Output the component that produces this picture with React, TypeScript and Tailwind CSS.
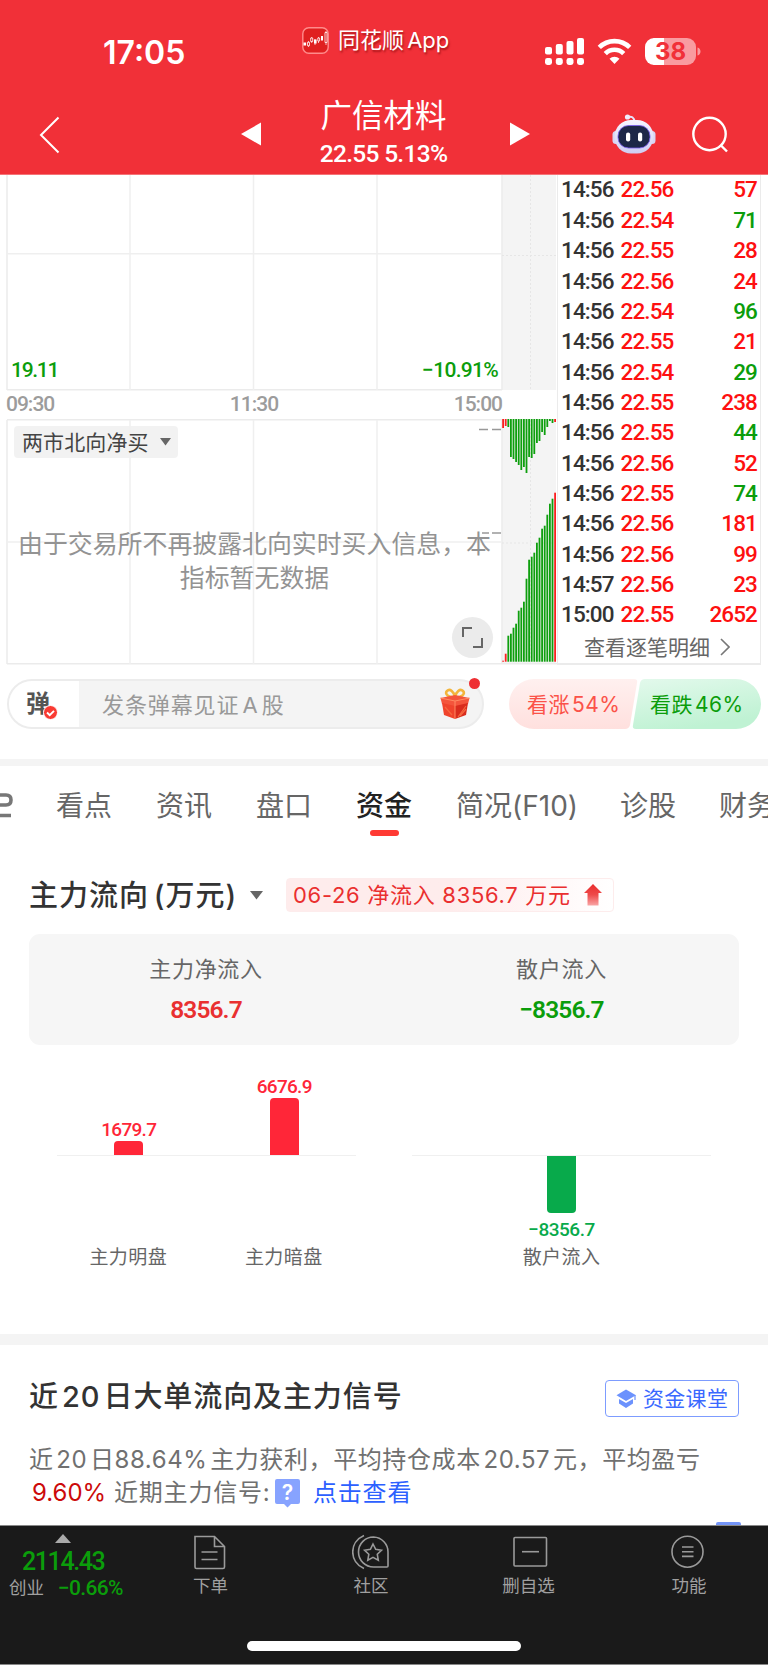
import type { ReactNode } from "react";

type Trade = [time: string, price: string, volume: string, dir: "up" | "down"];

const trades: Trade[] = [
  ["14:56", "22.56", "57", "up"],
  ["14:56", "22.54", "71", "down"],
  ["14:56", "22.55", "28", "up"],
  ["14:56", "22.56", "24", "up"],
  ["14:56", "22.54", "96", "down"],
  ["14:56", "22.55", "21", "up"],
  ["14:56", "22.54", "29", "down"],
  ["14:56", "22.55", "238", "up"],
  ["14:56", "22.55", "44", "down"],
  ["14:56", "22.56", "52", "up"],
  ["14:56", "22.55", "74", "down"],
  ["14:56", "22.56", "181", "up"],
  ["14:56", "22.56", "99", "up"],
  ["14:57", "22.56", "23", "up"],
  ["15:00", "22.55", "2652", "up"],
];

// Call auction volumes, in px of the side chart
const unmatched = [9, 7, 8, 38, 40, 43, 46, 51, 48, 54, 38, 39, 35, 24, 22, 13, 16, 8, 2, 4, 3];
const matched = [1, 8, 26, 28, 34, 38, 51, 54, 60, 83, 102, 105, 109, 119, 124, 133, 136, 147, 158, 163, 169];

function auctionColor(i: number) {
  return i < 2 || i === unmatched.length - 1 ? "#fb2020" : "#0e9f0e";
}

function StatusBar() {
  return (
    <div className="flex h-[92px] items-start">
      <div className="w-[302px] pt-[37px] pl-[103px] text-[32px] leading-[31px] font-semibold">
        17:05
      </div>
      <div className="flex w-[243px] items-center pt-[27px]">
        <svg width="27" height="27" viewBox="0 0 27 27" fill="none">
          <rect x="0.8" y="0.8" width="25.4" height="25.4" rx="6" fill="#e02020" stroke="#ff8b8b" strokeWidth="1.4" />
          <path d="M6.500 14v6M9.700 10v6M16.500 10v6M13 12v6M24 4v14" stroke="#fff" strokeWidth="0.7" />
          <path d="M1.5 15.5h2.6v3H1.5zM12 12.500h2.6v4H12zM19 9h2v4.500h-2z" fill="#fff" />
          <path d="M5.5 15.3h2v3.4h-2zM8.7 11h2v3.5h-2zM15.8 11h1.8v3h-1.8zM23 5.5h2v10h-2z" fill="#e02020" stroke="#fff" strokeWidth="0.8" />
        </svg>
        <div className="ml-[9px] text-[22px] leading-[27px] [text-shadow:1px_2px_2px_rgba(110,0,0,0.55)] [word-spacing:-3px]">
          同花顺 App
        </div>
      </div>
      <svg className="mt-[38px]" width="158" height="28" viewBox="0 0 158 28" fill="#fff">
        <rect x="0" y="9" width="7" height="7.500" rx="2" />
        <rect x="10.800" y="6" width="7" height="10.500" rx="2" />
        <rect x="21.500" y="3" width="7" height="13.500" rx="2" />
        <rect x="32" y="0" width="7" height="16.500" rx="2" />
        <rect x="0" y="20" width="7" height="7" rx="2.400" />
        <rect x="10.800" y="20" width="7" height="7" rx="2.400" />
        <rect x="21.500" y="20" width="7" height="7" rx="2.400" />
        <rect x="32" y="20" width="7" height="7" rx="2.400" />
        <g fill="none" stroke="#fff" strokeWidth="4.600">
          <path d="M54.300 9.400a21.500 21.500 0 0 1 30.400 0" />
          <path d="M60.300 15.600a13 13 0 0 1 18.400 0" />
        </g>
        <path d="M69.500 26l-5-5.200a7.200 7.200 0 0 1 10 0z" />
        <path d="M108 0h34a9 9 0 0 1 9 9v9a9 9 0 0 1-9 9h-34z" fill="#f99ba0" />
        <path d="M119 0h-10a9 9 0 0 0-9 9v9a9 9 0 0 0 9 9h10z" />
        <path d="M152.500 9.500c4 1 4 7 0 8z" fill="#f99ba0" />
        <text x="125.500" y="22" textAnchor="middle" fill="#f13038" fontFamily="Inter, sans-serif" fontSize="24" fontWeight="700">
          38
        </text>
      </svg>
    </div>
  );
}

function TitleBar() {
  return (
    <div className="flex h-[82px] items-start">
      <svg className="mt-[24px] ml-[38px]" width="22" height="38" viewBox="0 0 22 38" fill="none" stroke="#fff" strokeWidth="2">
        <path d="M20.500 1.500L3 19l17.500 17.500" />
      </svg>
      <svg className="mt-[30px] ml-[181px]" width="20" height="24" viewBox="0 0 20 24" fill="#fff">
        <path d="M20 0.500v23L0 12z" />
      </svg>
      <div className="flex w-[249px] flex-col items-center pr-[4px]">
        <div className="mt-[8px] text-[31.500px] leading-[32px]">广信材料</div>
        <div className="mt-[9px] font-['Roboto',sans-serif] text-[24.500px] leading-[25px] font-medium tracking-[-0.7px]">
          22.55 5.13%
        </div>
      </div>
      <svg className="mt-[30px]" width="20" height="24" viewBox="0 0 20 24" fill="#fff">
        <path d="M0 0.500v23L20 12z" />
      </svg>
      <svg className="mt-[21px] ml-[82px]" width="44" height="42" viewBox="0 0 44 42">
        <defs>
          <linearGradient id="bot" x1="0" y1="0" x2="0" y2="1">
            <stop offset="0" stopColor="#f6f5ff" />
            <stop offset="1" stopColor="#cfcdf2" />
          </linearGradient>
        </defs>
        <path d="M15 4c5-1 7 0 7.500 5" fill="none" stroke="#e6e4fb" strokeWidth="2" />
        <circle cx="15.500" cy="4" r="2.600" fill="#efeefe" />
        <rect x="0.500" y="18" width="7" height="13" rx="3.500" fill="#d8d6f4" />
        <rect x="36.500" y="18" width="7" height="13" rx="3.500" fill="#d8d6f4" />
        <rect x="2.500" y="7" width="39" height="33.500" rx="16.500" fill="url(#bot)" />
        <rect x="6" y="12.500" width="32" height="22.500" rx="10.500" fill="#1d2747" stroke="#7a5cf0" strokeWidth="0.800" />
        <rect x="14" y="19.500" width="4.200" height="9" rx="2.100" fill="#fff" />
        <rect x="26" y="19.500" width="4.200" height="9" rx="2.100" fill="#fff" />
      </svg>
      <svg className="mt-[24px] ml-[36px]" width="38" height="38" viewBox="0 0 38 38" fill="none" stroke="#fff" strokeWidth="2.400">
        <circle cx="17.500" cy="18" r="16.200" />
        <path d="M28.500 29l6.500 6.500" />
      </svg>
    </div>
  );
}

function PriceChart() {
  return (
    <div className="relative h-[490px] w-[557px]">
      <svg width="557" height="490" viewBox="0 0 557 490" fill="none">
        <rect x="502" y="0" width="54" height="215" fill="#f4f4f4" />
        <rect x="502" y="244" width="54" height="245" fill="#f4f4f4" />
        <g stroke="#ebebeb" strokeWidth="1.500">
          <path d="M7 0v215M7 245v244M502 0v215M502 245v244" />
          <path d="M7 214.700h495M7 244.700h495M7 488.700h550" />
        </g>
        <g stroke="#efefef" strokeWidth="1.500">
          <path d="M130 0v215M253.500 0v215M377 0v215M7 78.700h495" />
          <path d="M130 245v244M253.500 245v244M377 245v244M7 367h495" />
        </g>
        <g stroke="#e6e6e6" strokeWidth="1" strokeDasharray="2 2">
          <path d="M530.500 0v215M530.500 245v244M502 80.500h54M502 368h54" />
        </g>
        {unmatched.map((h, i) => (
          <rect key={i} x={502.2 + i * 2.6} y="244" width="1.8" height={h} fill={auctionColor(i)} />
        ))}
        {matched.map((h, i) => (
          <rect key={i} x={502.2 + i * 2.6} y={486.7 - h} width="1.8" height={h} fill={auctionColor(i)} />
        ))}
        <path d="M479 254.500h9M492 254.500h9M482 358h7M492 358h9" stroke="#999" strokeWidth="1.600" />
      </svg>

      {/* Axis labels */}
      <div className="absolute top-[184px] left-[11px] font-['Roboto',sans-serif] text-[21px] leading-[22px] font-medium tracking-[-1.300px] text-[#0b9d0b]">
        19.11
      </div>
      <div className="absolute top-[184px] right-[59px] font-['Roboto',sans-serif] text-[21px] leading-[22px] font-medium tracking-[-0.7px] text-[#0b9d0b]">
        −10.91%
      </div>
      <div className="absolute top-[218px] left-[6px] flex w-[496px] justify-between font-['Roboto',sans-serif] text-[21px] leading-[22px] font-medium tracking-[-1px] text-[#9c9c9c]">
        <span>09:30</span>
        <span>11:30</span>
        <span>15:00</span>
      </div>

      {/* Indicator selector */}
      <div className="absolute top-[251px] left-[14px] flex h-[32px] w-[164px] items-center gap-[11px] rounded bg-[#f1f1f1]/90 pl-[8px] text-[21px] leading-none tracking-[0.1px] text-[#444]">
        两市北向净买
        <svg width="11" height="8" viewBox="0 0 11 8" fill="#666">
          <path d="M0 0h11L5.500 7.500z" />
        </svg>
      </div>

      <div className="absolute top-[351.500px] left-[6px] w-[497px] text-center text-[24.900px] leading-[34px] whitespace-nowrap text-[#939393]">
        由于交易所不再披露北向实时买入信息，本
        <br />
        指标暂无数据
      </div>

      <div className="absolute top-[442px] left-[452px] flex size-[41px] items-center justify-center rounded-full bg-[#ebebeb]">
        <svg width="21" height="21" viewBox="0 0 21 21" fill="none" stroke="#666" strokeWidth="2">
          <path d="M1 10V1h9M20 11v9h-9" />
        </svg>
      </div>
    </div>
  );
}

function TradeList() {
  return (
    <div className="h-[490px] w-[204px] border-x border-b-2 border-[#ebebeb] pr-[3px] pl-[3px]">
      <div className="-mt-[0.500px]">
        {trades.map(([time, price, volume, dir], i) => (
          <div key={i} className="flex h-[30.360px] items-center font-['Roboto',sans-serif] text-[22.500px] leading-none font-medium tracking-[-0.900px]">
            <span className="w-[59.500px] text-[#333]">{time}</span>
            <span className="text-[#fe1010]">{price}</span>
            <span className={dir === "up" ? "ml-auto text-[#fe1010]" : "ml-auto text-[#0b9d0b]"}>{volume}</span>
          </div>
        ))}
      </div>
      <div className="flex h-[35px] items-center pl-[23px] text-[21px] leading-none text-[#666]">
        查看逐笔明细
        <svg className="ml-[10px]" width="10" height="18" viewBox="0 0 10 18" fill="none" stroke="#777" strokeWidth="1.600">
          <path d="M1 1l8 8-8 8" />
        </svg>
      </div>
    </div>
  );
}

function Gift() {
  return (
    <svg width="30" height="32" viewBox="0 0 30 32">
      <path d="M15 9C9 10 4 6 7 3s7 1 8 6c1-5 5-9 8-6s-2 7-8 6z" fill="none" stroke="#f3b53c" strokeWidth="2.600" />
      <path d="M0.500 10L15 7l14.500 3-1.500 6-13 3-13-3z" fill="#f4553c" />
      <path d="M2 15l13 3v13L4 27z" fill="#f0442c" />
      <path d="M28 15l-13 3v13l11-4z" fill="#d92c1d" />
      <path d="M0.500 10L15 13l14.500-3M15 13v18" fill="none" stroke="#ff8a62" strokeWidth="1" />
      <path d="M18 29l8-11M20 28l6-7M5 19l7 8" stroke="#f6673f" strokeWidth="1.200" />
    </svg>
  );
}

function BarrageBar() {
  return (
    <div className="flex h-[94px] items-start pl-[7px]">
      <div className="relative mt-[14px] flex h-[50px] w-[477px] items-center rounded-full border-2 border-[#ececec] bg-[#f4f4f4]">
        <div className="relative flex h-full w-[70px] items-center rounded-l-full bg-white pl-[17px] text-[24px] leading-none font-bold text-[#555]">
          弹
          <svg className="absolute top-[24px] left-[34px]" width="15" height="15" viewBox="0 0 15 15">
            <circle cx="7.500" cy="7.500" r="7" fill="#f93a32" stroke="#fff" />
            <path d="M4 7.500l2.700 2.700L11 5.800" fill="none" stroke="#fff" strokeWidth="1.900" />
          </svg>
        </div>
        <div className="mt-px ml-[23px] flex-1 text-[22px] leading-none tracking-[0.9px] text-[#999] [word-spacing:-4px]">
          发条弹幕见证 A 股
        </div>
        <div className="mr-[12px]">
          <Gift />
        </div>
        <div className="absolute top-[-3px] right-[2px] size-[11px] rounded-full bg-[#ee2f33]" />
      </div>

      <div className="relative mt-[14px] ml-[25px] flex h-[50px] w-[252px] items-center">
        <svg className="absolute inset-0" width="252" height="50" viewBox="0 0 252 50">
          <defs>
            <linearGradient id="bull" x1="0" y1="0" x2="0" y2="1">
              <stop offset="0" stopColor="#fff0ef" />
              <stop offset="1" stopColor="#ffe0de" />
            </linearGradient>
            <linearGradient id="bear" x1="0" y1="0" x2="0.400" y2="1">
              <stop offset="0" stopColor="#e3f9ec" />
              <stop offset="1" stopColor="#bff2d3" />
            </linearGradient>
          </defs>
          <path d="M25 0h100q4 0 3 4l-7 42q-1 4-5 4H25a25 25 0 0 1 0-50z" fill="url(#bull)" />
          <path d="M136 0h91a25 25 0 0 1 0 50H127q-4 0-3-4l7-42q1-4 5-4z" fill="url(#bear)" />
        </svg>
        <span className="relative ml-[18px] text-[21px] leading-none tracking-[0.5px] text-[#fb5248] [word-spacing:-4.500px]">
          看涨 54%
        </span>
        <span className="absolute left-[141px] text-[21px] leading-none tracking-[0.5px] text-[#0b9d0b] [word-spacing:-4.500px]">
          看跌 46%
        </span>
      </div>
    </div>
  );
}

function Tabs() {
  return (
    <div className="flex h-[80px] items-start overflow-hidden border-t-[7px] border-[#f4f4f4] text-[28px] leading-[30px] whitespace-nowrap text-[#666]">
      <svg className="mt-[27px] shrink-0" width="14" height="25" viewBox="0 0 14 25" fill="none" stroke="#777" strokeWidth="3.600">
        <path d="M0 2h6q5 0 5 5t-5 5H0M0 22.500h11" />
      </svg>
      <span className="mt-[25px] ml-[42px]">看点</span>
      <span className="mt-[25px] ml-[44px]">资讯</span>
      <span className="mt-[25px] ml-[44px]">盘口</span>
      <div className="mt-[25px] ml-[44px] flex flex-col items-center font-medium text-[#222]">
        资金
        <div className="mt-[9px] h-[6px] w-[29px] rounded-full bg-[#ff3a33]" />
      </div>
      <span className="mt-[25px] ml-[44px]">简况(F10)</span>
      <span className="mt-[25px] ml-[42px]">诊股</span>
      <span className="mt-[25px] ml-[43px]">财务</span>
    </div>
  );
}

function FlowBar({ value, label, height }: { value: string; label: string; height: number }) {
  return (
    <div className="flex w-[155.500px] flex-col items-center">
      <div className="flex h-[110px] flex-col items-center justify-end">
        <div className="mb-[2px] font-['Roboto',sans-serif] text-[19px] leading-[19px] font-medium tracking-[-0.7px] text-[#ff2638]">
          {value}
        </div>
        <div className="w-[29px] rounded-t-[4px] bg-[#ff2638]" style={{ height }} />
      </div>
      <div className="mt-[93px] pr-px text-[19px] leading-[20px] tracking-[0.4px] text-[#666]">{label}</div>
    </div>
  );
}

function MainFlow() {
  return (
    <section className="h-[495px] px-[29px]">
      <div className="flex h-[95px] items-start pt-[39px]">
        <h2 className="mt-[2px] text-[29px] leading-[32px] font-medium tracking-[1px] whitespace-nowrap text-[#333] [word-spacing:-4px]">
          主力流向 (万元)
        </h2>
        <svg className="absolute mt-[13px] ml-[221px]" width="13" height="9" viewBox="0 0 13 9" fill="#666">
          <path d="M0 0h13L6.500 8.500z" />
        </svg>
        <div className="absolute ml-[257px] flex h-[34px] w-[328px] items-center justify-between rounded border border-[#fdecec] bg-linear-to-r from-[#feecec] from-50% to-white pr-[11px] pl-[6px] text-[22px] leading-none tracking-[0.7px] whitespace-nowrap text-[#ea2f2f]">
          <span>06-26 净流入 8356.7 万元</span>
          <svg width="18" height="22" viewBox="0 0 18 22">
            <defs>
              <linearGradient id="rise" x1="0" y1="0" x2="0" y2="1">
                <stop offset="0" stopColor="#e92c2c" />
                <stop offset="0.500" stopColor="#ee4a4a" />
                <stop offset="1" stopColor="#f9a5a5" />
              </linearGradient>
            </defs>
            <path d="M9 0l9 9h-3.500v12.500h-11V9H0z" fill="url(#rise)" />
          </svg>
        </div>
      </div>

      {/* Summary */}
      <div className="grid h-[111px] grid-cols-2 rounded-[11px] bg-[#f6f6f6] pt-[23px] text-center">
        <div className="pr-px">
          <div className="text-[22px] leading-[24px] tracking-[0.7px] text-[#666]">主力净流入</div>
          <div className="mt-[16px] font-['Roboto',sans-serif] text-[24.500px] leading-[25px] font-semibold tracking-[-0.9px] text-[#e93030]">
            8356.7
          </div>
        </div>
        <div>
          <div className="text-[22px] leading-[24px] tracking-[0.7px] text-[#666]">散户流入</div>
          <div className="mt-[16px] font-['Roboto',sans-serif] text-[24.500px] leading-[25px] font-semibold tracking-[-0.9px] text-[#0b9d0b]">
            −8356.7
          </div>
        </div>
      </div>

      {/* Flow bars */}
      <div className="grid grid-cols-2">
        <div className="relative flex justify-center">
          <FlowBar value="1679.7" label="主力明盘" height={14} />
          <FlowBar value="6676.9" label="主力暗盘" height={57} />
          <div className="absolute top-[110px] h-px w-[299px] bg-[#f0f0f0]" />
        </div>
        <div className="relative flex flex-col items-center pt-[111px]">
          <div className="absolute top-[110px] h-px w-[299px] bg-[#f0f0f0]" />
          <div className="h-[57px] w-[29px] rounded-b-[4px] bg-[#08aa4b]" />
          <div className="mt-[7px] font-['Roboto',sans-serif] text-[19px] leading-[19px] font-medium tracking-[-0.5px] text-[#08aa4b]">
            −8356.7
          </div>
          <div className="mt-[9px] text-[19px] leading-[20px] tracking-[0.4px] text-[#666]">散户流入</div>
        </div>
      </div>
    </section>
  );
}

function SignalSection() {
  return (
    <section className="relative h-[191px] border-t-[11px] border-[#f4f4f4] px-[29px]">
      <div className="flex h-[72px] items-start justify-between pt-[35px]">
        <h2 className="mt-px text-[29px] leading-[32px] font-medium tracking-[0.9px] whitespace-nowrap text-[#333] [word-spacing:-5.500px]">
          近 20 日大单流向及主力信号
        </h2>
        <div className="flex h-[37px] w-[134px] items-center rounded border-[1.500px] border-[#7d9cff] pl-[10px] text-[21px] leading-none text-[#3a68ff]">
          <svg width="20" height="20" viewBox="0 0 20 20" fill="#6c92fd">
            <path d="M10 0.500l10 5.800-10 5.800L0.500 6.300z" />
            <path d="M3 10l7 4 7-4v4.500l-7 4.500-7-4.500z" />
            <path d="M19 6v5" stroke="#6c92fd" strokeWidth="1.200" />
          </svg>
          <span className="ml-[7px] tracking-[0.3px]">资金课堂</span>
        </div>
      </div>
      <div className="mt-[26px] text-[24px] leading-[33px] tracking-[0.6px] whitespace-nowrap text-[#707070] [word-spacing:-4.700px]">
        近 20 日88.64% 主力获利，平均持仓成本 20.57 元，平均盈亏
      </div>
      <div className="flex items-center text-[24px] leading-[33px] whitespace-nowrap text-[#707070]">
        <span className="ml-[3px] w-[82px] text-[#cc0a0a]">9.60%</span>
        <span className="w-[161px] tracking-[0.8px]">近期主力信号:</span>
        <svg className="mt-[1px]" width="25" height="29" viewBox="0 0 25 29">
          <path d="M2 0h21q2 0 2 2v21q0 2-2 2h-7l-3.500 3.500L9 25H2q-2 0-2-2V2q0-2 2-2z" fill="#87a3ff" />
          <text x="12.500" y="20.500" textAnchor="middle" fill="#fff" fontFamily="Inter, sans-serif" fontSize="21" fontWeight="600">
            ?
          </text>
        </svg>
        <span className="ml-[13px] tracking-[0.8px] text-[#2c60ff]">点击查看</span>
      </div>
      <div className="absolute right-[27px] bottom-0 h-[3px] w-[25px] rounded-t-[2px] bg-[#7495f8]" />
    </section>
  );
}

function NavItem({ label, width, children }: { label: string; width: string; children: ReactNode }) {
  return (
    <div className={`flex shrink-0 flex-col items-center ${width}`}>
      <svg className="mt-[7px]" width="38" height="38" viewBox="0 0 38 38" fill="none" stroke="#9a9a9a" strokeWidth="1.600">
        {children}
      </svg>
      <div className="mt-[5px] text-[17.500px] leading-[20px] text-[#a0a0a0]">{label}</div>
    </div>
  );
}

function BottomNav() {
  return (
    <nav className="relative flex h-[140px] border-y border-y-[#888] bg-[#1a1a1a]">
      <div className="w-[131px] shrink-0">
        <svg className="mt-[8px] ml-[55px]" width="16" height="9" viewBox="0 0 16 9" fill="#aaa">
          <path d="M8 0l8 9H0z" />
        </svg>
        <div className="mt-[6px] ml-[22px] font-['Roboto',sans-serif] text-[25px] leading-[25px] font-medium tracking-[-1.400px] text-[#0b9d0b]">
          2114.43
        </div>
        <div className="mt-[3px] flex items-center leading-[22px]">
          <span className="ml-[9px] w-[49px] text-[17.500px] text-[#a0a0a0]">创业</span>
          <span className="font-['Roboto',sans-serif] text-[21px] font-medium tracking-[-0.7px] text-[#0b9d0b]">−0.66%</span>
        </div>
      </div>
      <NavItem label="下单" width="w-[159px]">
        <path d="M3 3.500h19.500l10 10V34q0 1.500-1.500 1.500H4.500Q3 35.500 3 34zM22.500 3.500v10h10M9.500 19h16M9.500 26.500h16" />
      </NavItem>
      <NavItem label="社区" width="w-[162px]">
        <path d="M21.500 4a15 15 0 1 0 0 30h13.500q1 0 1-1V19.500A15 15 0 0 0 21.500 4zM12 2.500C-3 9-3 29 12 35.500" />
        <path d="M21 11l2.700 5.300 5.800.9-4.200 4.100 1 5.900-5.300-2.800-5.200 2.800 1-5.900-4.200-4.100 5.800-.9z" />
      </NavItem>
      <NavItem label="删自选" width="w-[153px]">
        <rect x="4" y="4.500" width="32.500" height="28.500" rx="1" />
        <path d="M12 18.700h17" />
      </NavItem>
      <NavItem label="功能" width="w-[163px] pl-[5px]">
        <circle cx="17.500" cy="18.700" r="15.500" />
        <path d="M12 14h11.500M12 18.700h11.500M12 23.400h11.500" />
      </NavItem>
      <div className="absolute top-[115px] left-[247px] h-[10px] w-[274px] rounded-full bg-white" />
    </nav>
  );
}

export default function App() {
  return (
    <div className="flex h-[1665px] w-[768px] flex-col overflow-hidden bg-white font-['Inter','Noto_Sans_CJK_SC',sans-serif]">
      <header className="h-[175px] border-b border-[#f57377] bg-[#f13038] text-white">
        <StatusBar />
        <TitleBar />
      </header>
      <div className="flex h-[490px]">
        <PriceChart />
        <TradeList />
      </div>
      <BarrageBar />
      <Tabs />
      <MainFlow />
      <SignalSection />
      <BottomNav />
    </div>
  );
}
